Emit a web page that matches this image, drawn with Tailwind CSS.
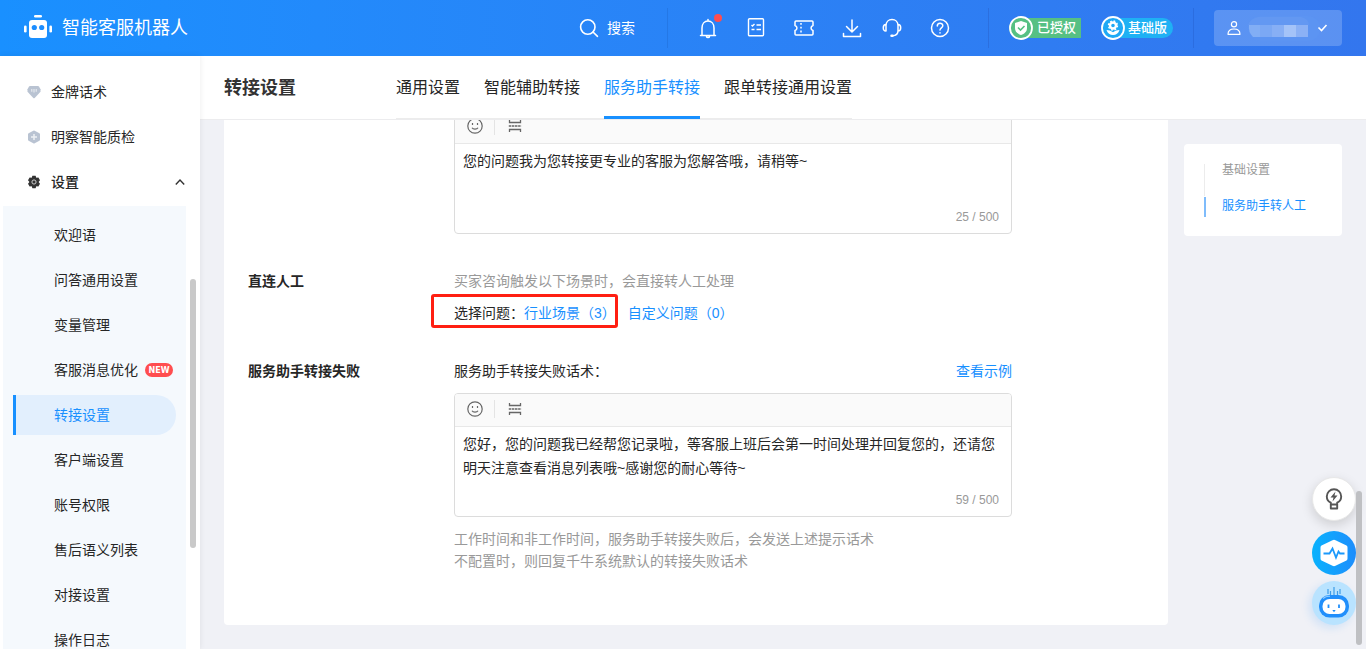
<!DOCTYPE html>
<html lang="zh-CN">
<head>
<meta charset="utf-8">
<meta name="viewport" content="width=device-width, initial-scale=1">
<title>智能客服机器人 - 转接设置</title>
<script src="https://cdn.jsdelivr.net/npm/@tailwindcss/browser@4"></script>
</head>
<body class="relative flex h-screen flex-col overflow-hidden bg-[#f0f1f6] font-['Liberation_Sans','Noto_Sans_CJK_SC',sans-serif] text-sm text-[#262626]">

<!-- Top bar -->
<header class="flex h-14 shrink-0 items-center bg-linear-to-r from-[#1990ff] to-[#3376ee] pr-6 pl-6 text-white">
  <a href="#" class="flex items-center gap-2.5 text-lg">
    <svg class="h-7 w-7" viewBox="0 0 28 28" fill="currentColor">
      <rect x="10" y="1" width="8" height="2.600" rx="1.300"/>
      <rect x="5" y="6" width="18" height="18" rx="3"/>
      <rect x="0" y="11.500" width="2.600" height="7" rx="1.300"/>
      <rect x="25.400" y="11.500" width="2.600" height="7" rx="1.300"/>
      <circle cx="10.300" cy="13.500" r="2.600" fill="#1c8dff"/>
      <circle cx="17.700" cy="13.500" r="2.600" fill="#1c8dff"/>
    </svg>
    <span>智能客服机器人</span>
  </a>
  <button class="ml-auto flex items-center gap-2">
    <svg class="h-5 w-5" viewBox="0 0 20 20" fill="none" stroke="currentColor" stroke-width="1.600" stroke-linecap="round"><circle cx="8.800" cy="9" r="7.200"/><path d="M14 14l4.500 4.300"/></svg>
    <span>搜索</span>
  </button>
  <span class="ml-8 h-10 w-px bg-[#2478e6]"></span>
  <div class="ml-7 flex items-center gap-6">
    <button class="relative" aria-label="通知">
      <svg class="h-6 w-6" viewBox="0 0 24 24" fill="none" stroke="currentColor" stroke-width="1.500" stroke-linecap="round" stroke-linejoin="round"><path d="M4.500 19.500h15M6 19.500v-7.500c0-4.200 2.500-7 6-7s6 2.800 6 7v7.500M12 3.500v1.500M10.500 20.500c.3 1.300 2.700 1.300 3 0"/></svg>
      <span class="absolute -top-0.5 -right-0.5 h-2 w-2 rounded-full bg-[#ff4d4f]"></span>
    </button>
    <button aria-label="任务清单">
      <svg class="h-6 w-6" viewBox="0 0 24 24" fill="none" stroke="currentColor" stroke-width="1.400"><rect x="4.500" y="2.700" width="15" height="17" rx="1"/><path d="M7.500 9l1 1 2-2M12.500 9h4.500M7.500 13.500h3M12.500 13.500h4.500"/></svg>
    </button>
    <button aria-label="卡券">
      <svg class="h-6 w-6" viewBox="0 0 24 24" fill="none" stroke="currentColor" stroke-width="1.500" stroke-linejoin="round"><path d="M3 6q0-1 1-1h16q1 0 1 1v3.500c-2.600.7-2.600 4.300 0 5V18q0 1-1 1H4q-1 0-1-1v-3.500c2.600-.7 2.600-4.300 0-5z"/><path d="M9 7v10.500" stroke-dasharray="1.800 2"/></svg>
    </button>
    <div class="flex items-center gap-4">
      <button aria-label="下载">
        <svg class="h-6 w-6" viewBox="0 0 24 24" fill="none" stroke="currentColor" stroke-width="1.500" stroke-linecap="round" stroke-linejoin="round"><path d="M12 4v12M6.500 10.500l5.500 5.500 5.500-5.500M3.500 17.500v3h17v-3"/></svg>
      </button>
      <button aria-label="在线客服">
        <svg class="h-6 w-6" viewBox="0 0 24 24" fill="none" stroke="currentColor" stroke-width="1.500" stroke-linecap="round" stroke-linejoin="round"><path d="M6 15V9.500c0-3.500 2.500-6 6-6s6 2.500 6 6V15M6 15c-2 0-2.700-1.300-2.700-3.300S4 8.500 6 8.500M18 15c2 0 2.700-1.300 2.700-3.300S20 8.500 18 8.500M18 15c0 3-2 4.500-5.500 4.800"/><path d="M11.500 19.800h1" stroke-width="2.500"/></svg>
      </button>
    </div>
    <button aria-label="帮助">
      <svg class="h-6 w-6" viewBox="0 0 24 24" fill="none" stroke="currentColor" stroke-width="1.500" stroke-linecap="round"><circle cx="12" cy="12" r="8.500"/><path d="M9.300 10c0-3.600 5.500-3.600 5.500-.3 0 2-2.800 2.200-2.800 4.300M12 16.800v.2"/></svg>
    </button>
  </div>
  <span class="ml-9 h-10 w-px bg-[#2b6fdf]"></span>
  <div class="ml-5 flex items-center gap-5 text-[13px] font-medium">
    <span class="flex h-5 w-[72px] items-center rounded-[3px] rounded-l-full bg-[#56c083]">
      <svg class="h-6 w-6 shrink-0" viewBox="0 0 24 24"><circle cx="12" cy="12" r="11" fill="#56c083" stroke="#fff" stroke-width="1.800"/><path d="M12 5l6 2v5c0 3.500-2.500 5.800-6 7-3.500-1.200-6-3.500-6-7V7z" fill="#fff"/><path d="M9 11.500l2.500 2.500 4-4" fill="none" stroke="#56c083" stroke-width="1.600"/></svg>
      <span class="ml-1 shrink-0">已授权</span>
    </span>
    <span class="flex h-5 w-[72px] items-center rounded-full bg-[#1fb1f4]">
      <svg class="h-6 w-6 shrink-0" viewBox="0 0 24 24"><circle cx="12" cy="12" r="11" fill="#1fa9f5" stroke="#fff" stroke-width="1.800"/><circle cx="12" cy="9.500" r="3" fill="none" stroke="#fff" stroke-width="2.400"/><circle cx="12" cy="9.500" r="4.500" fill="none" stroke="#fff" stroke-width="1.400" stroke-dasharray="1.770 1.770"/><path d="M5.500 14c2.500 0 4 .8 6.500 2.200 2.500-1.400 4-2.200 6.500-2.200-1 3.500-3.500 5-6.500 5s-5.500-1.500-6.500-5z" fill="#fff"/></svg>
      <span class="ml-[3px] shrink-0">基础版</span>
    </span>
  </div>
  <span class="ml-5 h-10 w-px bg-[#2b6de0]"></span>
  <button class="ml-5 flex h-9 w-32 items-center rounded bg-white/20 pl-3" aria-label="账户菜单">
    <svg class="h-4 w-4" viewBox="0 0 16 16" fill="none" stroke="currentColor" stroke-width="1.200"><circle cx="8" cy="4.300" r="2.600"/><path d="M2 14.300c0-4 2.500-5.300 6-5.300s6 1.300 6 5.300z" stroke-linejoin="round"/></svg>
    <svg class="ml-1.5 h-7 w-[72px]" viewBox="0 0 72 28">
      <rect x="0" y="2" width="72" height="25" rx="12" fill="#5c94f2"/>
      <path d="M24 3h29q8 2 8 8H0q2-6 10-8z" fill="#6398f2"/>
      <path d="M1 11h11v12H5q-5-5-4-12z" fill="#82aef5"/>
      <rect x="12" y="11" width="12" height="12" fill="#7ba8f4"/>
      <rect x="24" y="11" width="12" height="12" fill="#87aff5"/>
      <rect x="36" y="11" width="12" height="12" fill="#a4c3f8"/>
      <rect x="48" y="11" width="12" height="12" fill="#8bb1f5"/>
    </svg>
    <svg class="-ml-1 h-3 w-3" viewBox="0 0 12 12" fill="none" stroke="currentColor" stroke-width="1.600"><path d="M2.500 5.500l3 3 5-5.500"/></svg>
  </button>
</header>

<div class="flex min-h-0 flex-1">
  <!-- Side navigation -->
  <aside class="relative z-10 w-50 shrink-0 overflow-hidden bg-white pt-4 shadow-[0_0_6px_rgba(0,0,0,0.08)]">
    <nav aria-label="主导航">
      <ul class="flex flex-col gap-[5px]">
        <li><a href="#" class="flex h-10 items-center gap-2.5 pl-[27px]">
          <svg class="h-3.5 w-3.5" viewBox="0 0 14 14"><path d="M3 1h8q.6 0 1 .6l1.500 2.700v2.500L7.700 13q-.7.700-1.400 0L.5 6.800V4.300L2 1.600Q2.400 1 3 1z" fill="#b9c3d2"/><path d="M4.800 4v2.800M7 4v3.500M9.200 4v2.800" stroke="#fff" stroke-width="1.100" opacity=".7"/></svg>
          金牌话术</a></li>
        <li><a href="#" class="flex h-10 items-center gap-2.5 pl-[27px]">
          <svg class="h-3.5 w-3.5" viewBox="0 0 14 14"><path d="M6.300.7q.7-.4 1.400 0l4.700 2.600q.6.400.6 1v5.400q0 .6-.6 1l-4.700 2.600q-.7.400-1.400 0l-4.700-2.600q-.6-.4-.6-1V4.300q0-.6.600-1z" fill="#b9c3d2"/><path d="M7 4v6M4 7h6" fill="none" stroke="#fff" stroke-width="1.500" opacity=".75"/></svg>
          明察智能质检</a></li>
        <li><button aria-expanded="true" class="flex h-10 w-full items-center gap-2.5 pr-3.5 pl-[27px] font-medium">
          <svg class="h-3.5 w-3.5" viewBox="0 0 14 14"><path d="M5.400.8h3.200l.7 2 2.100-.4 1.600 2.800L11.600 7l1.400 1.800-1.600 2.800-2.100-.4-.7 2H5.400l-.7-2-2.100.4L1 8.800 2.400 7 1 5.200l1.600-2.800 2.100.4z" fill="#333"/><circle cx="7" cy="7" r="2.100" fill="none" stroke="#ccc" stroke-width="1"/></svg>
          设置
          <svg class="ml-auto h-3 w-3" viewBox="0 0 12 12" fill="none" stroke="#333" stroke-width="1.400"><path d="M1.800 8.500L6 4l4.200 4.500"/></svg>
        </button></li>
      </ul>
      <ul class="mt-1 mr-3.5 ml-[3px] flex flex-col gap-[5px] bg-[#f5f9fd] pt-[9px] pb-10 pl-2.5">
        <li><a href="#" class="flex h-10 items-center pl-[41px]">欢迎语</a></li>
        <li><a href="#" class="flex h-10 items-center pl-[41px]">问答通用设置</a></li>
        <li><a href="#" class="flex h-10 items-center pl-[41px]">变量管理</a></li>
        <li><a href="#" class="flex h-10 items-center gap-[7px] pl-[41px]">客服消息优化
          <span class="flex h-3.5 w-7 items-center justify-center rounded-full bg-[#ff4d4f] pt-px font-['DejaVu_Sans'] text-[8px] leading-3 font-bold text-white">NEW</span></a></li>
        <li><a href="#" aria-current="page" class="mr-2.5 flex h-10 items-center rounded-r-full border-l-3 border-[#1890ff] bg-[#e2effd] pl-[38px] text-[#1890ff]">转接设置</a></li>
        <li><a href="#" class="flex h-10 items-center pl-[41px]">客户端设置</a></li>
        <li><a href="#" class="flex h-10 items-center pl-[41px]">账号权限</a></li>
        <li><a href="#" class="flex h-10 items-center pl-[41px]">售后语义列表</a></li>
        <li><a href="#" class="flex h-10 items-center pl-[41px]">对接设置</a></li>
        <li><a href="#" class="flex h-10 items-center pl-[41px]">操作日志</a></li>
      </ul>
    </nav>
    <span class="absolute top-[223px] right-1 h-[269px] w-1.5 rounded-full bg-[#c9c9c9]"></span>
  </aside>

  <main class="flex min-w-0 flex-1 flex-col">
    <!-- Page title and tabs -->
    <div class="flex h-16 shrink-0 gap-25 border-b border-[#ececee] bg-white pl-6">
      <h1 class="flex items-center text-lg font-bold text-[#333]">转接设置</h1>
      <nav aria-label="转接设置分类" class="flex gap-6 text-base shadow-[inset_0_-1px_0_#ececec]">
        <a href="#" class="flex items-center">通用设置</a>
        <a href="#" class="flex items-center">智能辅助转接</a>
        <a href="#" aria-current="page" class="flex items-center border-b-3 border-[#1890ff] pt-[3px] text-[#1890ff]">服务助手转接</a>
        <a href="#" class="flex items-center">跟单转接通用设置</a>
      </nav>
    </div>

    <div class="flex min-h-0 flex-1 items-start gap-4 overflow-hidden px-6">
      <section class="min-w-0 flex-1 overflow-hidden rounded-b bg-white px-6 pb-[53px]">
        <!-- First editor, partly scrolled under the tab bar -->
        <div class="-mt-2.5 flex">
          <div class="w-[206px] shrink-0"></div>
          <div class="w-full max-w-[558px] overflow-hidden rounded border border-[#dcdcdc]">
            <div class="flex h-[33px] items-center border-b border-[#e8e8e8] bg-[#fafafa] pb-0.5 pl-3 text-[#666]">
              <button aria-label="插入表情"><svg class="h-4 w-4" viewBox="0 0 16 16" fill="none" stroke="currentColor" stroke-width="1.200"><circle cx="8" cy="8" r="7.200"/><path d="M5 9.800c1 1.800 5 1.800 6 0M5.500 5v2M10.500 5v2"/></svg></button>
              <span class="ml-[11px] h-[18px] w-px bg-[#e4e4e4]"></span>
              <button aria-label="插入分段符" class="ml-3"><svg class="h-4 w-4" viewBox="0 0 16 16" fill="none" stroke="currentColor" stroke-width="1.300"><path d="M2.500 2v2.500h11V2M2.500 14v-2.500h11V14"/><path d="M1.800 8h12.500" stroke-width="1.500" stroke-dasharray="2.500 .6"/></svg></button>
            </div>
            <div class="pt-[5px] pb-1">
              <textarea aria-label="转接话术" class="block h-14 w-full resize-none overflow-hidden px-2 leading-6 outline-none">您的问题我为您转接更专业的客服为您解答哦，请稍等~</textarea>
              <p class="pr-3 text-right text-xs leading-6 text-[#999]">25 / 500</p>
            </div>
          </div>
        </div>

        <div class="mt-9 flex leading-[22px]">
          <h2 class="w-[206px] shrink-0 font-bold">直连人工</h2>
          <div class="min-w-0 flex-1">
            <p class="text-[#999]">买家咨询触发以下场景时，会直接转人工处理</p>
            <p class="mt-2.5 flex gap-3">
              <span class="relative">选择问题：<a href="#" class="text-[#1890ff]">行业场景（3）</a>
                <span class="pointer-events-none absolute -top-2 -right-0.5 -bottom-1 -left-[23px] rounded-[3px] border-3 border-[#ff1f12]"></span>
              </span>
              <a href="#" class="text-[#1890ff]">自定义问题（0）</a>
            </p>
          </div>
        </div>

        <div class="mt-9 flex leading-[22px]">
          <h2 class="w-[206px] shrink-0 font-bold">服务助手转接失败</h2>
          <div class="w-full max-w-[558px]">
            <div class="flex justify-between">
              <label for="fail-text">服务助手转接失败话术：</label>
              <a href="#" class="text-[#1890ff]">查看示例</a>
            </div>
            <div class="mt-[11px] overflow-hidden rounded border border-[#dcdcdc]">
              <div class="flex h-[33px] items-center border-b border-[#e8e8e8] bg-[#fafafa] pb-0.5 pl-3 text-[#666]">
                <button aria-label="插入表情"><svg class="h-4 w-4" viewBox="0 0 16 16" fill="none" stroke="currentColor" stroke-width="1.200"><circle cx="8" cy="8" r="7.200"/><path d="M5 9.800c1 1.800 5 1.800 6 0M5.500 5v2M10.500 5v2"/></svg></button>
                <span class="ml-[11px] h-[18px] w-px bg-[#e4e4e4]"></span>
                <button aria-label="插入分段符" class="ml-3"><svg class="h-4 w-4" viewBox="0 0 16 16" fill="none" stroke="currentColor" stroke-width="1.300"><path d="M2.500 2v2.500h11V2M2.500 14v-2.500h11V14"/><path d="M1.800 8h12.500" stroke-width="1.500" stroke-dasharray="2.500 .6"/></svg></button>
              </div>
              <div class="pt-[5px] pb-1">
                <textarea id="fail-text" class="block h-14 w-full resize-none overflow-hidden px-2 leading-6 outline-none">您好，您的问题我已经帮您记录啦，等客服上班后会第一时间处理并回复您的，还请您明天注意查看消息列表哦~感谢您的耐心等待~</textarea>
                <p class="pr-3 text-right text-xs leading-6 text-[#999]">59 / 500</p>
              </div>
            </div>
            <p class="mt-[11px] text-[#999]">工作时间和非工作时间，服务助手转接失败后，会发送上述提示话术<br>不配置时，则回复千牛系统默认的转接失败话术</p>
          </div>
        </div>
      </section>

      <!-- In-page anchors -->
      <nav aria-label="页内导航" class="mt-6 flex w-[158px] shrink-0 flex-col rounded bg-white py-4 pl-5 text-xs">
        <a href="#" class="mt-1 flex h-8 items-start border-l border-[#ececec] pl-[17px] leading-3 text-[#999]">基础设置</a>
        <a href="#" class="mt-px mb-[3px] flex h-5 items-center border-l-2 border-[#7fbcfb] pb-0.5 pl-4 text-[#1890ff]">服务助手转人工</a>
      </nav>
    </div>
  </main>
</div>

<!-- Floating tools -->
<div class="absolute right-2.5 bottom-6 z-20 flex flex-col items-center">
  <button aria-label="功能建议" class="flex h-11 w-11 items-center justify-center rounded-full border border-[#e8e8e8] bg-white shadow-[0_4px_12px_rgba(0,0,0,0.15)]">
    <svg class="h-6 w-6" viewBox="0 0 24 24" fill="none" stroke="#555" stroke-width="1.900" stroke-linejoin="round"><path d="M8.800 17.500v-1.800C6.300 14.500 4.800 12.300 4.800 9.500a7.200 7.200 0 0 1 14.400 0c0 2.800-1.500 5-4 6.200v1.800zM8.800 17.500v4h6.400v-4"/><path d="M13.500 4.500L8.500 10.500h3L10.500 14.500l5-6h-3z" fill="#555" stroke="none"/></svg>
  </button>
  <button aria-label="健康诊断" class="mt-2.5 flex h-11 w-11 items-center justify-center rounded-full bg-linear-to-r from-[#08b2fd] to-[#1d8dfc]">
    <svg class="h-7 w-7" viewBox="0 0 28 28"><path d="M12.500 1.200q1.500-.8 3 0l11 5.300q1 .5 1 2v11q0 1.500-1 2l-11 5.300q-1.500.8-3 0l-11-5.300q-1-.5-1-2v-11q0-1.500 1-2z" fill="#fff"/><path d="M3.500 14.500h6l3-5 3.500 9 2.500-6 1.500 2h4.500" fill="none" stroke="#1b99fb" stroke-width="1.800"/></svg>
  </button>
  <button aria-label="智能助手" class="mt-1.5 flex h-11 w-11 items-center justify-center rounded-full bg-[#b9e3ff] pb-0.5 shadow-[-3px_3px_8px_rgba(24,144,255,0.15)]">
    <svg class="h-8 w-8" viewBox="0 0 32 32"><path d="M10 3v5M12.500 5v4M16 1v9M19.500 5v4M22 3v5" stroke="#3d9ce8" stroke-width="1.200"/><rect x="1" y="9" width="30" height="22.500" rx="10.500" fill="#218ffb"/><rect x="4.500" y="13" width="23" height="15" rx="7" fill="#fff"/><path d="M5 12.500q3-2.500 7-2.200" fill="none" stroke="#8dcbff" stroke-width="1.200"/><path d="M10.500 18.500V22M21 18.500V22" stroke="#218ffb" stroke-width="1.800"/><path d="M14.300 24h3.400L16 26.300z" fill="#218ffb"/></svg>
  </button>
</div>
<span class="absolute right-1 bottom-1 z-20 h-[154px] w-1.5 rounded-full bg-[#bfc0c3]"></span>
</body>
</html>
